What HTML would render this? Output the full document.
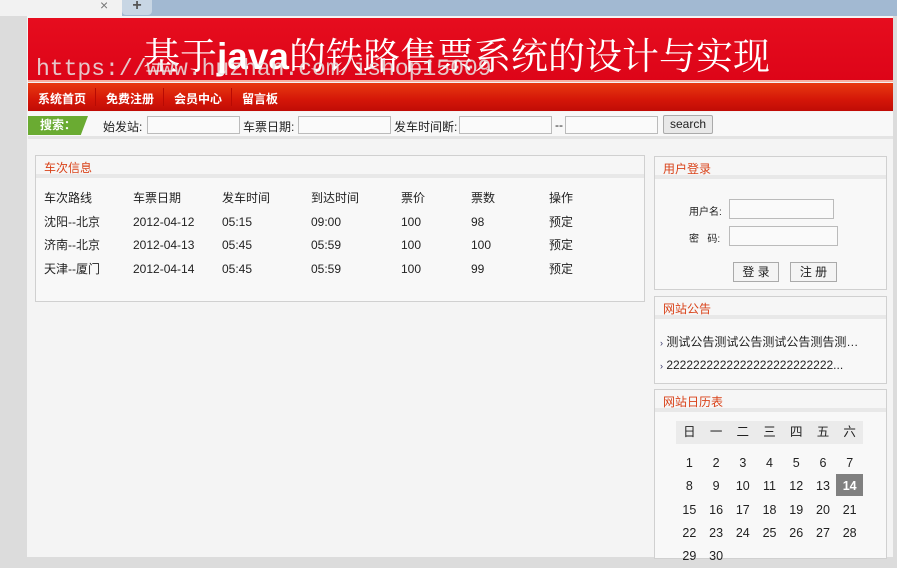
<!DOCTYPE html>
<html><head><meta charset="utf-8"><style>
*{margin:0;padding:0;box-sizing:border-box}
body{width:897px;height:557px;overflow:hidden;background:#dcdcdc;font-family:"Liberation Sans","Noto Sans CJK SC",sans-serif;font-size:12px;color:#222;position:relative}
.a{position:absolute}
.panel{position:absolute;border:1px solid #d0d0d0;background:#f8f8f8}
.ph{height:22px;line-height:24px;padding-left:8px;color:#d9431a;font-size:12px;border-bottom:4px solid #e8e8e8;background:#f6f6f6}
input.i{position:absolute;height:18px;border:1px solid #bbb;background:#fafafa}
.btn{position:absolute;border:1px solid #aaa;background:#f4f4f4;text-align:center;font-size:12px;line-height:18px}
.nav{position:absolute;top:90px;color:#fff;font-weight:bold;font-size:12px;white-space:nowrap}
.sep{position:absolute;top:88px;width:1px;height:18px;background:#b80a04}
</style></head><body>
<div class="a" style="left:0;top:0;width:897px;height:16px;background:#a2b9d2"></div>
<div class="a" style="left:0;top:0;width:122px;height:16px;background:#f2f2f2"></div>
<div class="a" style="left:100px;top:-3px;color:#777;font-size:14px">×</div>
<div class="a" style="left:122px;top:0;width:30px;height:15px;background:#c8d6e4;border-radius:0 0 4px 4px;color:#555;font-weight:bold;font-size:16px;line-height:12px;text-align:center">+</div>
<div class="a" style="left:27px;top:16px;width:866px;height:541px;background:#f4f4f4"></div>
<div class="a" style="left:28px;top:18px;width:865px;height:64px;background:linear-gradient(#e60d1e,#dd0418)"></div>
<div class="a" style="left:28px;top:80px;width:865px;height:2px;background:#f7b0a0"></div>
<div class="a" style="left:143px;top:28px;color:#fff;font-size:37px;font-family:'Noto Serif CJK SC','Liberation Serif',serif;white-space:nowrap;line-height:50px">基于<b style="font-family:'Liberation Sans',sans-serif">java</b>的铁路售票系统的设计与实现</div>
<div class="a" style="left:36px;top:55px;color:#e8e8e8;font-size:23px;font-family:'Liberation Mono',monospace;white-space:nowrap;opacity:.85;line-height:28px">https://www.huzhan.com/ishop15009</div>
<div class="a" style="left:28px;top:83px;width:865px;height:28px;background:linear-gradient(#e83a10,#d41608 60%,#c00c06)"></div>
<div class="nav" style="left:38px">系统首页</div><div class="sep" style="left:95px"></div>
<div class="nav" style="left:106px">免费注册</div><div class="sep" style="left:163px"></div>
<div class="nav" style="left:174px">会员中心</div><div class="sep" style="left:231px"></div>
<div class="nav" style="left:242px">留言板</div>
<div class="a" style="left:28px;top:112px;width:865px;height:27px;background:#f8f8f8;border-bottom:3px solid #e4e4e4"></div>
<div class="a" style="left:28px;top:116px;width:60px;height:19px;background:#6aab32;clip-path:polygon(0 0,100% 0,88% 100%,0 100%);color:#fff;font-weight:bold;line-height:19px;padding-left:12px">搜索：</div>
<div class="a" style="left:103px;top:118px">始发站:</div>
<input class="i" style="left:147px;top:116px;width:93px">
<div class="a" style="left:243px;top:118px">车票日期:</div>
<input class="i" style="left:298px;top:116px;width:93px">
<div class="a" style="left:394px;top:118px">发车时间断:</div>
<input class="i" style="left:459px;top:116px;width:93px">
<div class="a" style="left:555px;top:118px">--</div>
<input class="i" style="left:565px;top:116px;width:93px">
<div class="btn" style="left:663px;top:115px;width:50px;height:19px;background:#e8e8e8;border-radius:2px;line-height:17px">search</div>
<div class="a" style="left:28px;top:146px;width:865px;height:411px;background:#f4f4f4"></div>
<div class="panel" style="left:35px;top:155px;width:610px;height:147px"><div class="ph">车次信息</div></div>
<div class="a" style="left:44px;top:187px;line-height:23.5px;width:600px">
<div style="display:flex"><span style="width:89px">车次路线</span><span style="width:89px">车票日期</span><span style="width:89px">发车时间</span><span style="width:90px">到达时间</span><span style="width:70px">票价</span><span style="width:78px">票数</span><span>操作</span></div>
<div style="display:flex"><span style="width:89px">沈阳--北京</span><span style="width:89px">2012-04-12</span><span style="width:89px">05:15</span><span style="width:90px">09:00</span><span style="width:70px">100</span><span style="width:78px">98</span><span>预定</span></div>
<div style="display:flex"><span style="width:89px">济南--北京</span><span style="width:89px">2012-04-13</span><span style="width:89px">05:45</span><span style="width:90px">05:59</span><span style="width:70px">100</span><span style="width:78px">100</span><span>预定</span></div>
<div style="display:flex"><span style="width:89px">天津--厦门</span><span style="width:89px">2012-04-14</span><span style="width:89px">05:45</span><span style="width:90px">05:59</span><span style="width:70px">100</span><span style="width:78px">99</span><span>预定</span></div>
</div>
<div class="panel" style="left:654px;top:156px;width:233px;height:134px"><div class="ph">用户登录</div></div>
<div class="a" style="left:689px;top:203px;font-size:10px">用户名:</div>
<input class="i" style="left:729px;top:199px;width:105px;height:20px">
<div class="a" style="left:689px;top:230px;font-size:10px">密&nbsp;&nbsp;&nbsp;码:</div>
<input class="i" style="left:729px;top:226px;width:109px;height:20px">
<div class="btn" style="left:733px;top:262px;width:46px;height:20px">登 录</div>
<div class="btn" style="left:790px;top:262px;width:47px;height:20px">注 册</div>
<div class="panel" style="left:654px;top:296px;width:233px;height:88px"><div class="ph">网站公告</div></div>
<div class="a" style="left:660px;top:333px;white-space:nowrap"><span style="color:#336;font-size:9px">›</span> 测试公告测试公告测试公告测告测…</div>
<div class="a" style="left:660px;top:358px;white-space:nowrap;color:#222"><span style="color:#336;font-size:9px">›</span> 2222222222222222222222222...</div>
<div class="panel" style="left:654px;top:389px;width:233px;height:170px"><div class="ph">网站日历表</div></div>
<div class="a" style="left:676px;top:421px;width:187px;height:23px;background:#ebebeb"></div>
<div class="a" style="left:676px;top:421px;width:187px;font-size:12.5px">
<div style="display:flex;height:23px;line-height:23px"><span style="flex:1;text-align:center">日</span><span style="flex:1;text-align:center">一</span><span style="flex:1;text-align:center">二</span><span style="flex:1;text-align:center">三</span><span style="flex:1;text-align:center">四</span><span style="flex:1;text-align:center">五</span><span style="flex:1;text-align:center">六</span></div>
</div>
<div class="a" style="left:836px;top:474px;width:27px;height:22px;background:#808080"></div>
<div class="a" style="left:676px;top:452px;width:187px;font-size:12.5px;line-height:23.3px">
<div style="display:flex"><span style="flex:1;text-align:center">1</span><span style="flex:1;text-align:center">2</span><span style="flex:1;text-align:center">3</span><span style="flex:1;text-align:center">4</span><span style="flex:1;text-align:center">5</span><span style="flex:1;text-align:center">6</span><span style="flex:1;text-align:center">7</span></div>
<div style="display:flex"><span style="flex:1;text-align:center">8</span><span style="flex:1;text-align:center">9</span><span style="flex:1;text-align:center">10</span><span style="flex:1;text-align:center">11</span><span style="flex:1;text-align:center">12</span><span style="flex:1;text-align:center">13</span><span style="flex:1;text-align:center;color:#fff;font-weight:bold">14</span></div>
<div style="display:flex"><span style="flex:1;text-align:center">15</span><span style="flex:1;text-align:center">16</span><span style="flex:1;text-align:center">17</span><span style="flex:1;text-align:center">18</span><span style="flex:1;text-align:center">19</span><span style="flex:1;text-align:center">20</span><span style="flex:1;text-align:center">21</span></div>
<div style="display:flex"><span style="flex:1;text-align:center">22</span><span style="flex:1;text-align:center">23</span><span style="flex:1;text-align:center">24</span><span style="flex:1;text-align:center">25</span><span style="flex:1;text-align:center">26</span><span style="flex:1;text-align:center">27</span><span style="flex:1;text-align:center">28</span></div>
<div style="display:flex"><span style="flex:1;text-align:center">29</span><span style="flex:1;text-align:center">30</span><span style="flex:1"></span><span style="flex:1"></span><span style="flex:1"></span><span style="flex:1"></span><span style="flex:1"></span></div>
</div>
</body></html>
